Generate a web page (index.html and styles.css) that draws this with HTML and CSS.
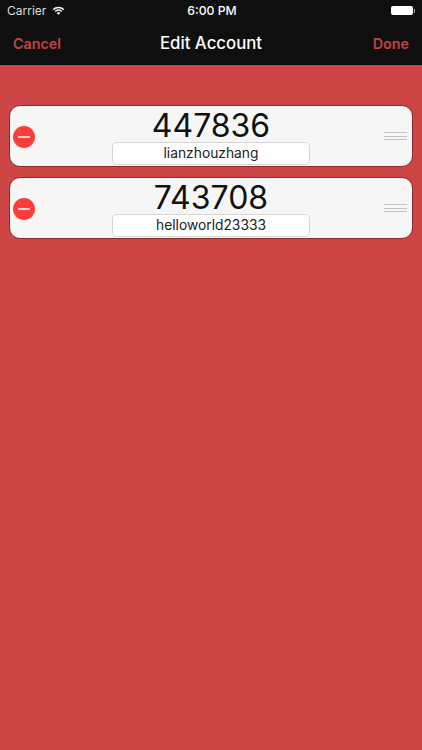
FILE: index.html
```html
<!DOCTYPE html>
<html lang="en">
<head>
    <meta charset="UTF-8">
    <meta name="viewport" content="width=device-width, initial-scale=1.0">
    <title>Edit Account</title>
    <link rel="stylesheet" href="styles.css">
</head>
<body>
    <header class="top-bar">
        <div class="status-bar">
            <div class="status-left">
                <span>Carrier</span>
                <svg class="wifi" width="13" height="9" viewBox="0 0 14 10">
                    <path d="M0.6 3.4 A9 9 0 0 1 13.4 3.4 L12.2 4.6 A7.3 7.3 0 0 0 1.8 4.6 Z" fill="#fff"/>
                    <path d="M2.7 5.5 A6 6 0 0 1 11.3 5.5 L10.1 6.7 A4.3 4.3 0 0 0 3.9 6.7 Z" fill="#fff"/>
                    <path d="M4.9 7.7 A3 3 0 0 1 9.1 7.7 L7 9.8 Z" fill="#fff"/>
                </svg>
            </div>
            <span class="status-time">6:00 PM</span>
            <div class="status-right">
                <div class="battery"></div>
                <div class="battery-tip"></div>
            </div>
        </div>
        <nav class="nav-bar">
            <span class="nav-btn">Cancel</span>
            <span class="nav-title">Edit Account</span>
            <span class="nav-btn nav-btn-right">Done</span>
        </nav>
    </header>

    <main class="list">
        <div class="row">
            <div class="remove"><span></span></div>
            <div class="row-body">
                <div class="code">447836</div>
                <div class="name">lianzhouzhang</div>
            </div>
            <div class="grip"><i></i><i></i><i></i></div>
        </div>
        <div class="row">
            <div class="remove"><span></span></div>
            <div class="row-body">
                <div class="code">743708</div>
                <div class="name">helloworld23333</div>
            </div>
            <div class="grip"><i></i><i></i><i></i></div>
        </div>
    </main>
</body>
</html>
```

FILE: styles.css
```css
html, body {
    height: 100%;
}
body {
    margin: 0;
    background: #cd4545;
    font-family: Inter, "Liberation Sans", sans-serif;
    overflow: hidden;
}
.top-bar {
    background: #0f0f0f;
    color: #fff;
    height: 65px;
}
.status-bar {
    height: 21px;
    display: flex;
    align-items: center;
    justify-content: space-between;
    padding: 0 7px 0 7px;
    font-size: 12px;
}
.status-left {
    flex: 1;
    display: flex;
    align-items: center;
    gap: 6px;
    color: #ddd;
}
.status-right {
    flex: 1;
    display: flex;
    align-items: center;
    justify-content: flex-end;
}
.status-time {
    font-size: 12.2px;
    font-weight: 500;
    margin-left: 2px;
}
.battery {
    width: 22px;
    height: 9px;
    background: #fff;
    border-radius: 2px;
}
.battery-tip {
    width: 1.5px;
    height: 4px;
    background: #aaa;
    margin-left: 1px;
}
.nav-bar {
    height: 44px;
    display: grid;
    grid-template-columns: 1fr auto 1fr;
    align-items: center;
    padding: 0 13px;
}
.nav-btn {
    color: #c04444;
    font-size: 14.3px;
    font-weight: 600;
}
.nav-btn-right {
    text-align: right;
}
.nav-title {
    font-size: 16.8px;
    font-weight: 500;
}
.list {
    padding: 40px 9px 0;
    display: flex;
    flex-direction: column;
    gap: 10px;
}
.row {
    box-sizing: border-box;
    height: 62px;
    background: #f6f6f7;
    border: 1px solid #8e2a2a;
    border-bottom-width: 1.5px;
    border-radius: 11px;
    display: grid;
    grid-template-columns: 1fr auto 1fr;
    align-items: center;
}
.remove {
    width: 22px;
    height: 22px;
    margin: 1px 0 0 3px;
    border-radius: 50%;
    background: #fc3d39;
    display: flex;
    align-items: center;
    justify-content: center;
}
.remove span {
    width: 12px;
    height: 2px;
    background: #fbd0ce;
}
.row-body {
    display: flex;
    flex-direction: column;
    align-items: center;
}
.code {
    font-size: 32px;
    line-height: 37px;
    margin-bottom: -2px;
    color: #111;
}
.name {
    box-sizing: border-box;
    width: 198px;
    height: 23px;
    line-height: 21px;
    background: #fff;
    border: 1.5px solid #d6d6d6;
    border-radius: 5px;
    text-align: center;
    font-size: 13.8px;
    color: #222;
}
.grip {
    width: 23px;
    margin-right: 5px;
    justify-self: end;
    display: flex;
    flex-direction: column;
    gap: 2.5px;
}
.grip i {
    display: block;
    height: 1px;
    background: #c4c4c8;
}
```
